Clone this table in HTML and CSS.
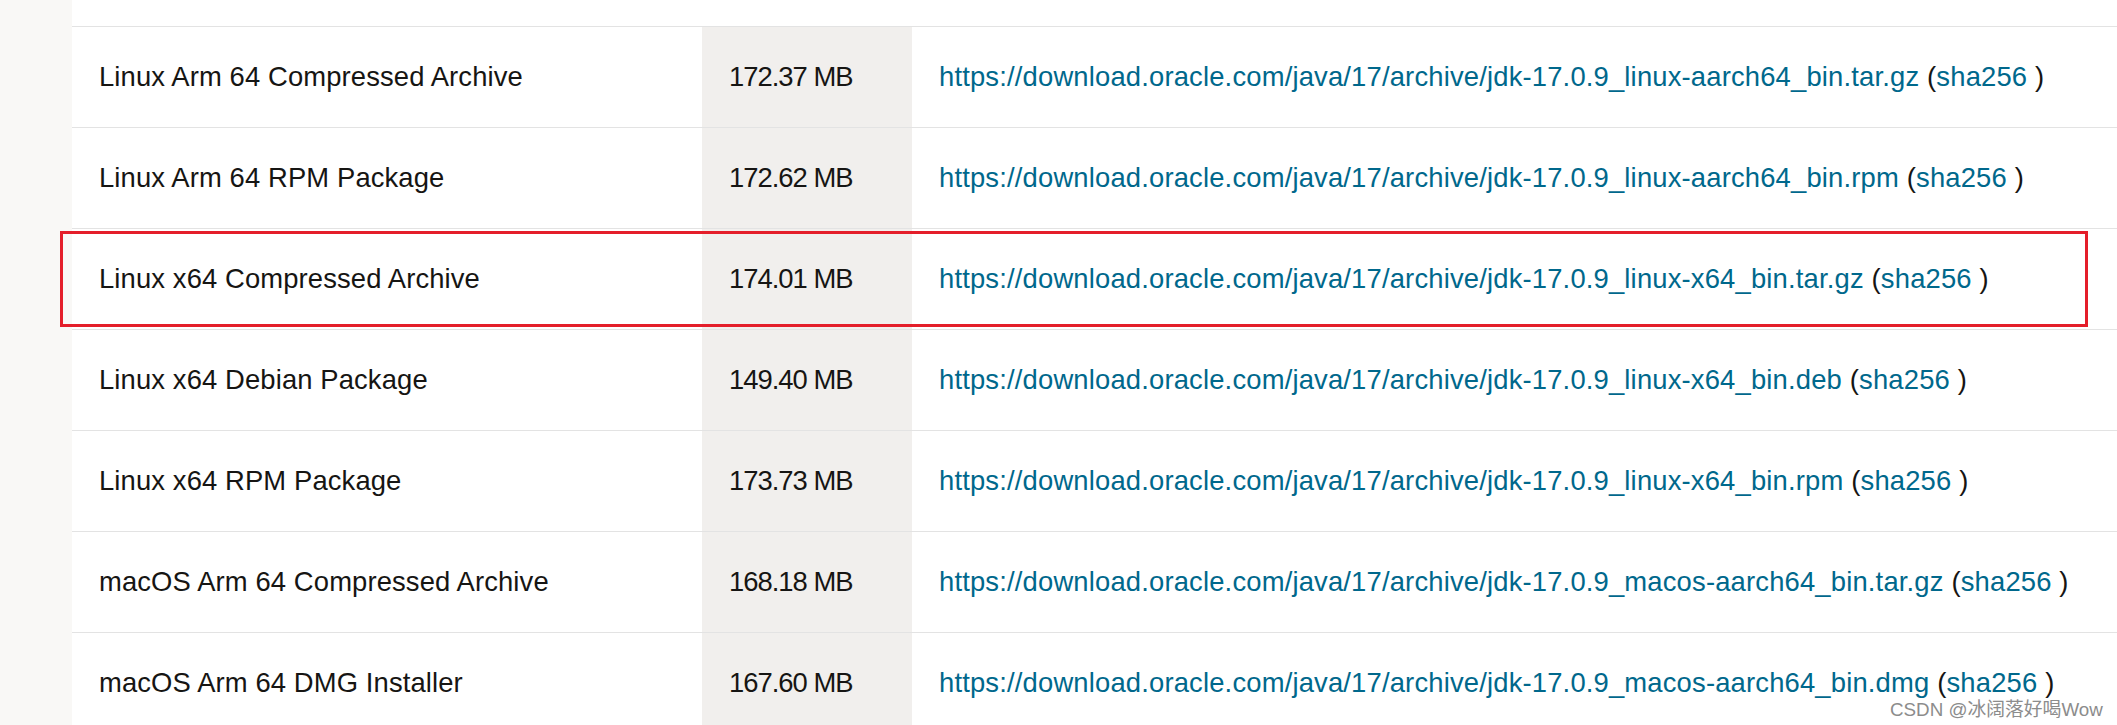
FILE: index.html
```html
<!DOCTYPE html>
<html lang="en">
<head>
<meta charset="utf-8">
<title>JDK 17 downloads</title>
<link rel="stylesheet" href="styles.css">
</head>
<body>
<div class="page">
  <aside class="rail"></aside>
  <main class="content">
    <table class="downloads">
      <colgroup>
        <col class="c-name">
        <col class="c-size">
        <col class="c-link">
      </colgroup>
      <tbody>
        <tr class="cut"><td></td><td></td><td></td></tr>
        <tr>
          <td class="name">Linux Arm 64 Compressed Archive</td>
          <td class="size">172.37 MB</td>
          <td class="link"><a href="#">https://download.oracle.com/java/17/archive/jdk-17.0.9_linux-aarch64_bin.tar.gz</a> (<a href="#">sha256</a> )</td>
        </tr>
        <tr>
          <td class="name">Linux Arm 64 RPM Package</td>
          <td class="size">172.62 MB</td>
          <td class="link"><a href="#">https://download.oracle.com/java/17/archive/jdk-17.0.9_linux-aarch64_bin.rpm</a> (<a href="#">sha256</a> )</td>
        </tr>
        <tr>
          <td class="name">Linux x64 Compressed Archive</td>
          <td class="size">174.01 MB</td>
          <td class="link"><a href="#">https://download.oracle.com/java/17/archive/jdk-17.0.9_linux-x64_bin.tar.gz</a> (<a href="#">sha256</a> )</td>
        </tr>
        <tr>
          <td class="name">Linux x64 Debian Package</td>
          <td class="size">149.40 MB</td>
          <td class="link"><a href="#">https://download.oracle.com/java/17/archive/jdk-17.0.9_linux-x64_bin.deb</a> (<a href="#">sha256</a> )</td>
        </tr>
        <tr>
          <td class="name">Linux x64 RPM Package</td>
          <td class="size">173.73 MB</td>
          <td class="link"><a href="#">https://download.oracle.com/java/17/archive/jdk-17.0.9_linux-x64_bin.rpm</a> (<a href="#">sha256</a> )</td>
        </tr>
        <tr>
          <td class="name">macOS Arm 64 Compressed Archive</td>
          <td class="size">168.18 MB</td>
          <td class="link"><a href="#">https://download.oracle.com/java/17/archive/jdk-17.0.9_macos-aarch64_bin.tar.gz</a> (<a href="#">sha256</a> )</td>
        </tr>
        <tr>
          <td class="name">macOS Arm 64 DMG Installer</td>
          <td class="size">167.60 MB</td>
          <td class="link"><a href="#">https://download.oracle.com/java/17/archive/jdk-17.0.9_macos-aarch64_bin.dmg</a> (<a href="#">sha256</a> )</td>
        </tr>
      </tbody>
    </table>
  </main>
  <div class="highlight"></div>
  <div class="watermark">CSDN @冰阔落好喝Wow</div>
</div>
</body>
</html>
```

FILE: styles.css
```css
html, body {
  margin: 0;
  padding: 0;
  background: #ffffff;
  overflow: hidden;
}

.page {
  position: relative;
  display: flex;
  width: 2117px;
  height: 725px;
  overflow: hidden;
  font-family: "Liberation Sans", Arial, sans-serif;
  color: #161513;
}

.rail {
  flex: 0 0 72px;
  background: #f9f8f6;
}

.content {
  flex: 1 1 auto;
}

.downloads {
  border-collapse: collapse;
  width: 100%;
  table-layout: fixed;
  font-size: 27.4px;
}

.c-name { width: 630px; }
.c-size { width: 210px; }

.downloads td {
  height: 100px;
  padding: 0 0 0 27px;
  border-bottom: 1px solid #e3e3e3;
  white-space: nowrap;
  vertical-align: middle;
}

.downloads tr.cut td {
  height: 26px;
}

.downloads td.name {
  letter-spacing: 0.12px;
}

.downloads td.size {
  background: #f1efed;
  letter-spacing: -1px;
}

.downloads td.link {
  letter-spacing: 0.17px;
}

.downloads tr.cut td.size {
  background: #ffffff;
}

.downloads a {
  color: #00688c;
  text-decoration: none;
}

.highlight {
  position: absolute;
  left: 60px;
  top: 231px;
  width: 2022px;
  height: 90px;
  border: 3px solid #e41e2a;
}

.watermark {
  position: absolute;
  left: 1890px;
  top: 694px;
  font-family: "Liberation Sans", "Noto Sans CJK SC", sans-serif;
  font-size: 18.8px;
  color: #8c8c8c;
  text-shadow: 0 0 1px #ffffff;
  white-space: nowrap;
}
```
